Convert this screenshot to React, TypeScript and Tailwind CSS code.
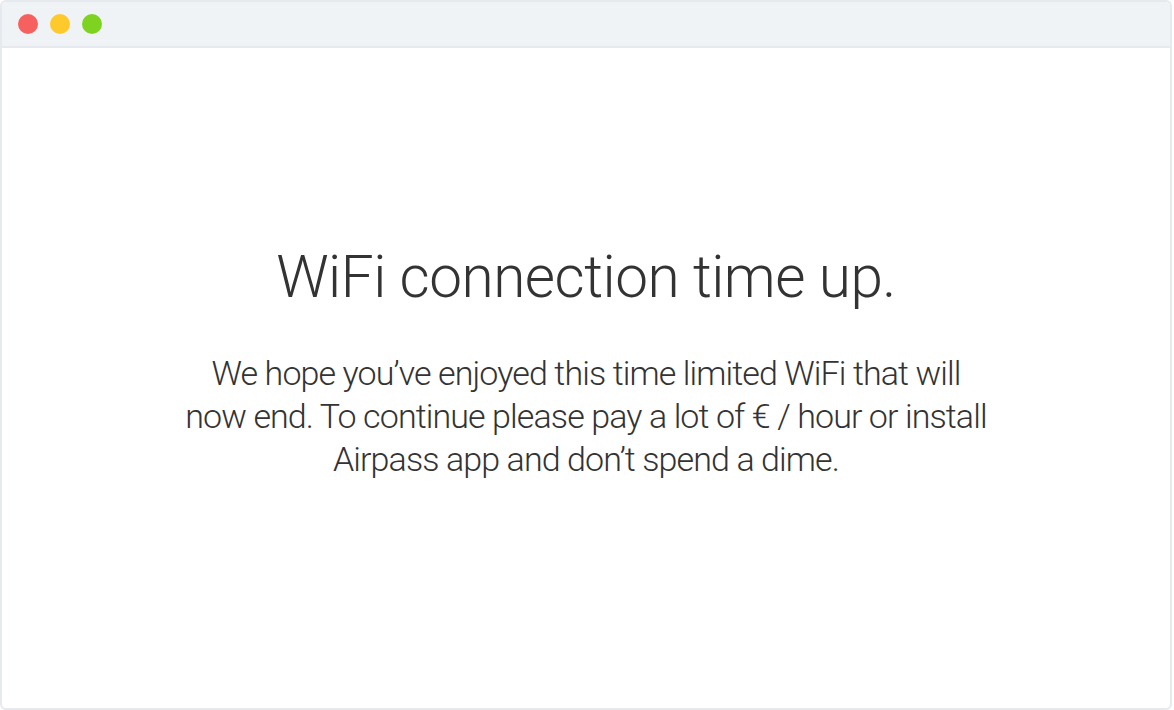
export default function App() {
  return (
    <div className="w-[1174px] h-[710px] bg-white">
      <div className="w-[1172px] h-[710px] flex flex-col rounded-[6px] border-2 border-[#e6e9ed] overflow-hidden bg-white">
        <div className="h-[46px] shrink-0 bg-[#f0f3f6] border-b-2 border-[#e6e9ed] flex items-center gap-[12px] pl-[16px]">
          <span className="w-[20px] h-[20px] rounded-full bg-[#f6605f]" />
          <span className="w-[20px] h-[20px] rounded-full bg-[#fec92a]" />
          <span className="w-[20px] h-[20px] rounded-full bg-[#7ed321]" />
        </div>
        <div className="flex-1 flex flex-col items-center pt-[196px] text-[#333333] font-['Roboto',sans-serif] font-light text-center">
          <h1 className="text-[58.5px] leading-[66px] tracking-[-0.5px]">WiFi connection time up.</h1>
          <p className="mt-[42px] text-[34px] leading-[43px] tracking-[-0.9px] whitespace-nowrap">
            We hope you’ve enjoyed this time limited WiFi that will
            <br />
            now end. To continue please pay a lot of € / hour or install
            <br />
            Airpass app and don’t spend a dime.
          </p>
        </div>
      </div>
    </div>
  );
}
